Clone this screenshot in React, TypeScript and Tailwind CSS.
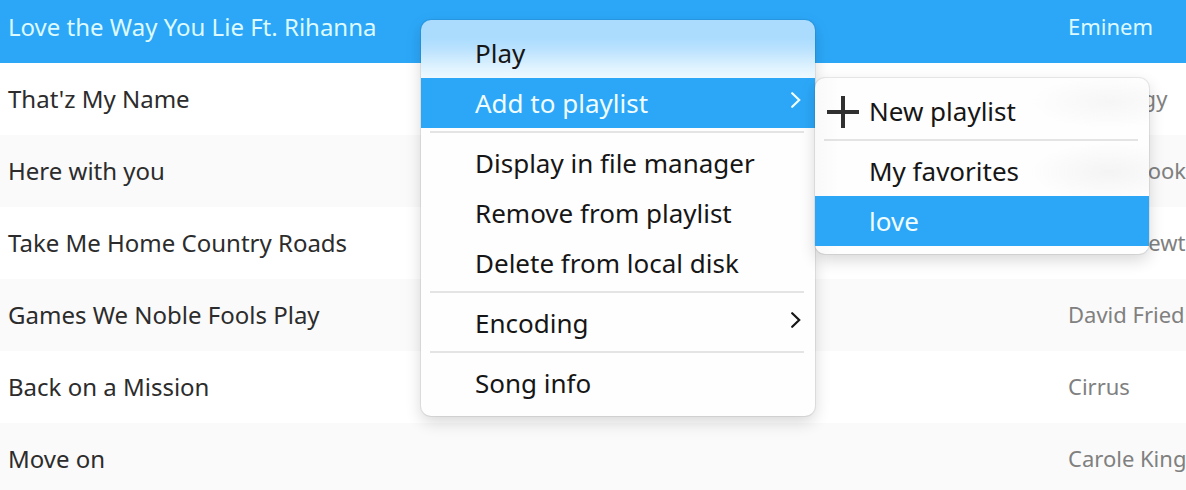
import { clsx } from "clsx";

type Song = { title: string; artist: string };

const songs: Song[] = [
  { title: "Love the Way You Lie Ft. Rihanna", artist: "Eminem" },
  { title: "That'z My Name", artist: "Petrology" },
  { title: "Here with you", artist: "Asher Book" },
  { title: "Take Me Home Country Roads", artist: "Olivia Newton-John" },
  { title: "Games We Noble Fools Play", artist: "David Friedman" },
  { title: "Back on a Mission", artist: "Cirrus" },
  { title: "Move on", artist: "Carole King" },
];

function Chevron() {
  return (
    <svg className="mb-1.5 ml-auto h-4 w-2.5" viewBox="0 0 10 16" fill="none" aria-hidden="true">
      <path d="M1.2 1.2 8.2 8l-7 6.8" stroke="currentColor" strokeWidth="2.2" strokeLinecap="round" />
    </svg>
  );
}

function Plus() {
  return (
    <svg className="mt-0.5 mr-2.5 h-8 w-8 text-[#303030]" viewBox="0 0 32 32" aria-hidden="true">
      <path d="M16 0v32M0 16h32" stroke="currentColor" strokeWidth="4" />
    </svg>
  );
}

type ItemProps = {
  label: string;
  active?: boolean;
  submenu?: boolean;
  add?: boolean;
};

function Item({ label, active, submenu, add }: ItemProps) {
  return (
    <button
      type="button"
      role="menuitem"
      aria-haspopup={submenu ? "menu" : undefined}
      className={clsx(
        "flex h-[50px] w-full items-center pr-3.5 text-left text-[26px] leading-9 whitespace-nowrap",
        add ? "pl-3" : "pl-[54px]",
        active ? "bg-[#2ca7f8] text-[#f0fdff]" : "text-[#161616]",
      )}
    >
      {add && <Plus />}
      {label}
      {submenu && <Chevron />}
    </button>
  );
}

function Separator() {
  return <div role="separator" className="mt-[3px] mr-[11px] mb-[5px] ml-[9px] h-0.5 bg-black/10" />;
}

const panel =
  "rounded-[10px] bg-[#fefefe] py-2 shadow-[0_0_0_1px_rgba(0,0,0,0.07),0_6px_16px_rgba(0,0,0,0.16)]";

export default function App() {
  return (
    <main className="relative h-screen overflow-hidden bg-white font-['Noto_Sans',sans-serif]">
      <table className="w-full table-fixed border-collapse text-left whitespace-nowrap">
        <colgroup>
          <col />
          <col className="w-[118px]" />
        </colgroup>
        <tbody>
          {songs.map((song, i) => (
            <tr
              key={song.title}
              className={clsx(
                i === 0 && "h-[63px] bg-[#2ca7f8] text-[#dcfaff]",
                i > 0 && "h-[72px]",
                i > 0 && i % 2 === 0 && "bg-[#fafafa]",
              )}
            >
              <td className={clsx("pl-2 text-2xl", i === 0 ? "pb-[9px]" : "text-[#2c2c2c]")}>{song.title}</td>
              <td className={clsx("text-[22px]", i === 0 ? "pb-[11px]" : "pb-0.5 text-[#808080]")}>
                {song.artist}
              </td>
            </tr>
          ))}
        </tbody>
      </table>

      <div className="absolute top-5 left-[421px] flex items-start">
        <div
          role="menu"
          aria-label="Song"
          className={clsx(
            panel,
            "w-[394px] bg-[linear-gradient(to_bottom,#abdcfe_0px,#abdcfe_18px,#b8e1fe_28px,#cceafe_38px,#e0f3ff_48px,#eff9ff_58px,#fefefe_72px)]",
          )}
        >
          <Item label="Play" />
          <Item label="Add to playlist" active submenu />
          <Separator />
          <Item label="Display in file manager" />
          <Item label="Remove from playlist" />
          <Item label="Delete from local disk" />
          <Separator />
          <Item label="Encoding" submenu />
          <Separator />
          <Item label="Song info" />
        </div>
        <div
          role="menu"
          aria-label="Add to playlist"
          className={clsx(
            panel,
            "mt-[58px] w-[334px] bg-[radial-gradient(ellipse_80px_26px_at_295px_24px,#f6f6f6,#f6f6f600),radial-gradient(ellipse_80px_30px_at_295px_94px,#f4f4f4,#f4f4f400),linear-gradient(to_right,#f9f9f9,#fefefe_24px)]",
          )}
        >
          <Item label="New playlist" add />
          <Separator />
          <Item label="My favorites" />
          <Item label="love" active />
        </div>
      </div>
    </main>
  );
}
